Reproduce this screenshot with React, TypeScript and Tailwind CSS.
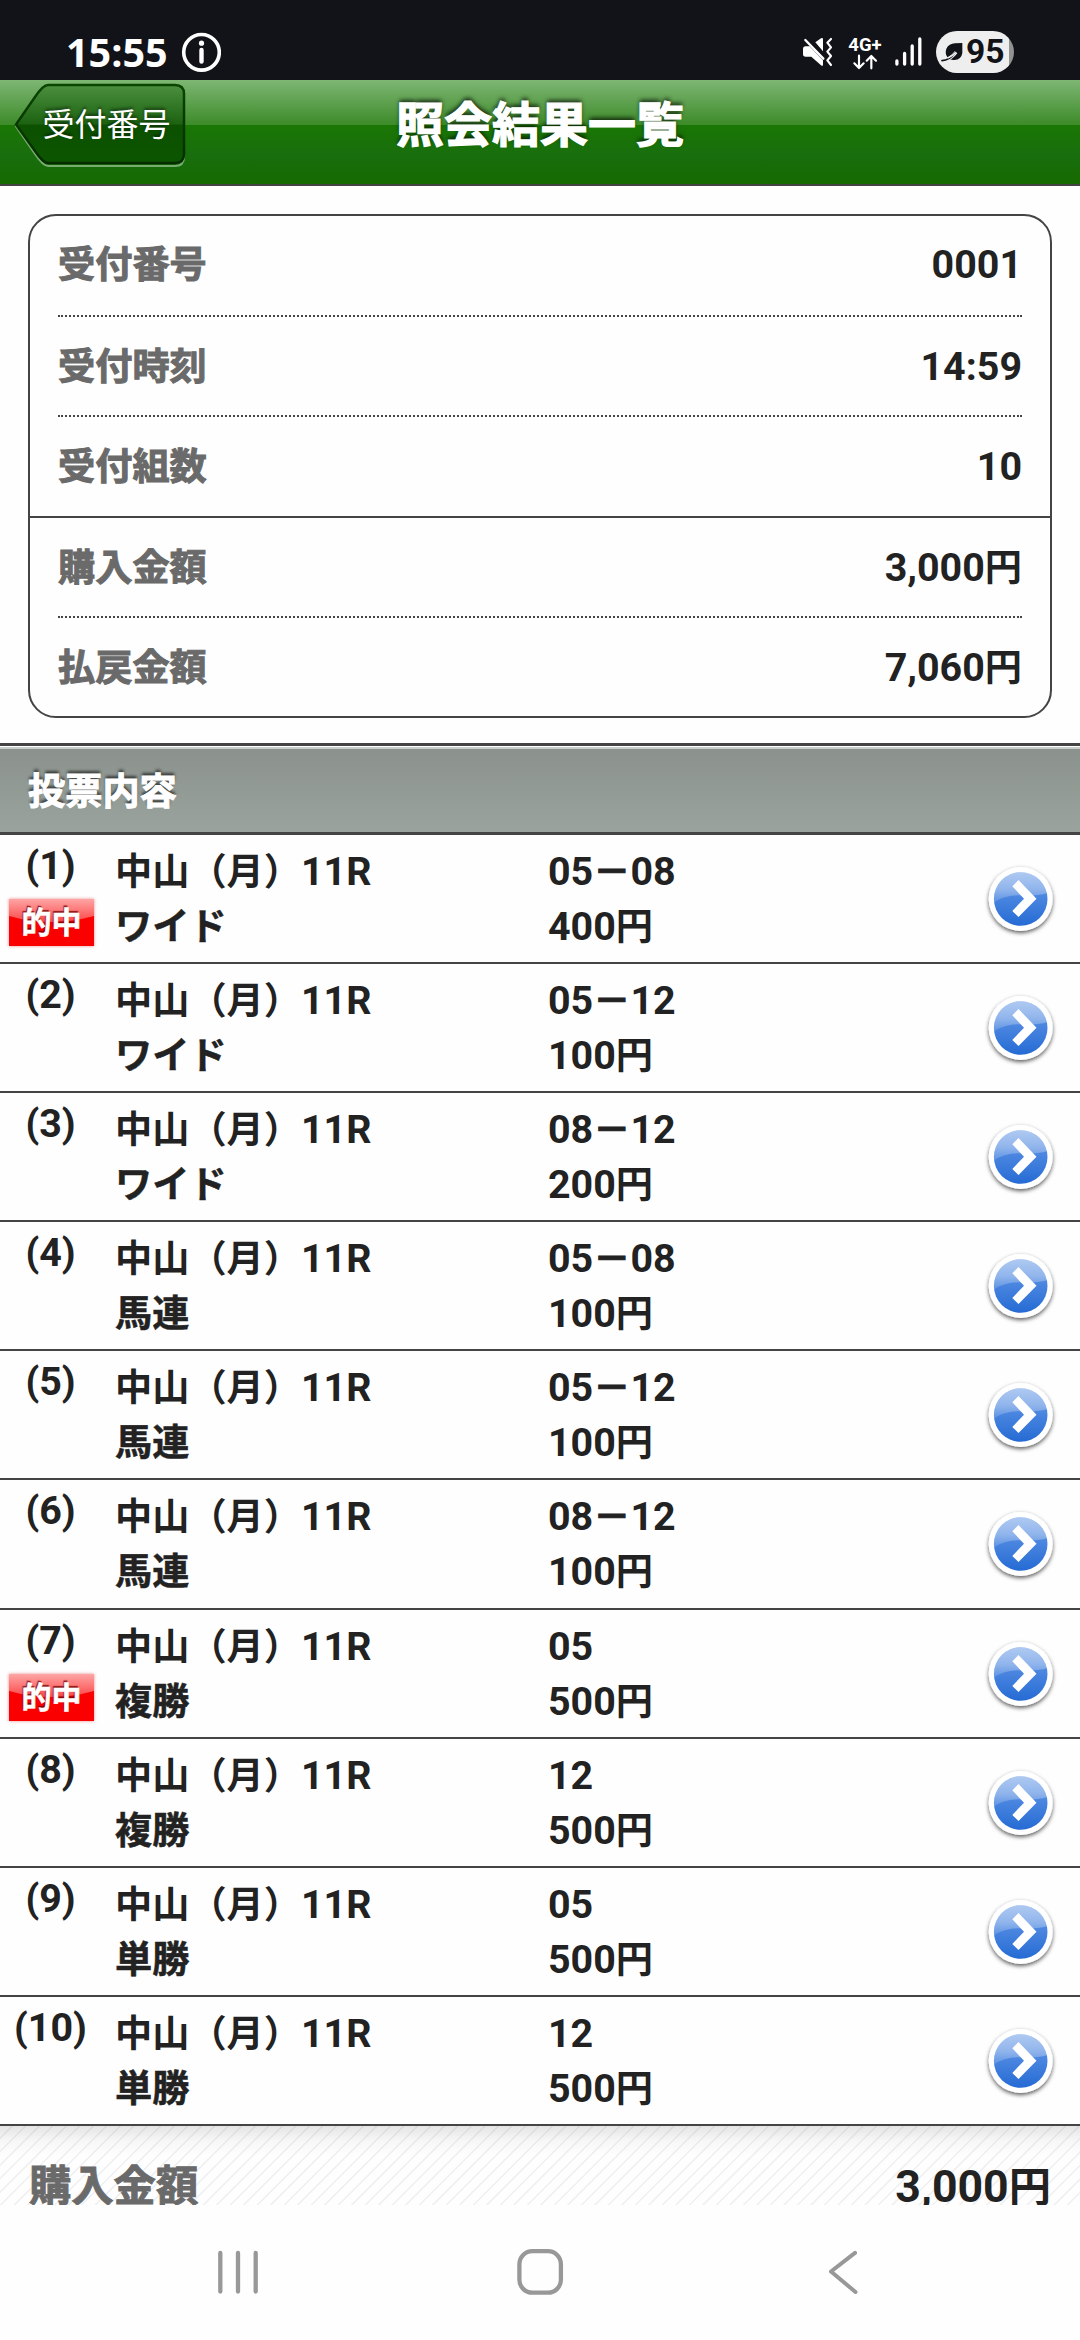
// App.tsx

import type { ReactNode } from "react";

type Bet = {
  no: number;
  type: string;
  pick: string[];
  amount: string;
  hit?: boolean;
};

const bets: Bet[] = [
  { no: 1, type: "ワイド", pick: ["05", "08"], amount: "400", hit: true },
  { no: 2, type: "ワイド", pick: ["05", "12"], amount: "100" },
  { no: 3, type: "ワイド", pick: ["08", "12"], amount: "200" },
  { no: 4, type: "馬連", pick: ["05", "08"], amount: "100" },
  { no: 5, type: "馬連", pick: ["05", "12"], amount: "100" },
  { no: 6, type: "馬連", pick: ["08", "12"], amount: "100" },
  { no: 7, type: "複勝", pick: ["05"], amount: "500", hit: true },
  { no: 8, type: "複勝", pick: ["12"], amount: "500" },
  { no: 9, type: "単勝", pick: ["05"], amount: "500" },
  { no: 10, type: "単勝", pick: ["12"], amount: "500" },
];

// Japanese glyphs are set a little smaller than the latin digits
function Jp({ children, className = "" }: { children: ReactNode; className?: string }) {
  return <span className={`text-[37.2px] leading-none ${className}`}>{children}</span>;
}

function StatusBar() {
  return (
    <div className="flex h-20 shrink-0 items-start justify-between bg-[#121318] text-white">
      <div className="flex pl-[66px]">
        <span className="mt-[25px] h-[55px] w-[99px] whitespace-nowrap font-['Open_Sans'] text-[39.5px] font-bold leading-[55px]">
          15:55
        </span>
        <svg className="mt-8 ml-4" width="40" height="40" viewBox="0 0 40 40" fill="none">
          <circle cx="20.5" cy="20.3" r="17.8" stroke="white" strokeWidth="3.6" />
          <circle cx="20.5" cy="11.2" r="2.6" fill="white" />
          <path d="M20.5 18v11.6" stroke="white" strokeWidth="4.4" strokeLinecap="round" />
        </svg>
      </div>

      <div className="flex pr-[66px]">
        {/* Mute / vibrate */}
        <svg className="mt-9" width="32" height="32" viewBox="0 0 96 96" fill="white">
          <path d="M3 39q0-8 8-8h12L63 73v13q-1 6-6 2L28 62H11q-8 0-8-8z" />
          <path d="M40 19L57 7q6-3 6 3v36z" />
          <path d="M10 12l54 56" stroke="white" strokeWidth="7" strokeLinecap="round" />
          <path d="M87 9L76 20l11 14-11 13 11 13-11 13 11 14" fill="none" stroke="white" strokeWidth="6.5" strokeLinecap="round" strokeLinejoin="round" />
        </svg>

        <div className="ml-[13px] flex w-[36px] flex-col items-center">
          <span className="mt-[34px] h-[19px] text-[18.5px] font-bold leading-[22px]">4G+</span>
          <svg className="mt-px" width="26" height="16" viewBox="0 0 78 48" fill="none" stroke="white" strokeWidth="6.5" strokeLinecap="round" strokeLinejoin="round">
            <path d="M21 5v36M7 28l14 14 14-14M58 43V7M44 20L58 6l14 14" />
          </svg>
        </div>

        <svg className="ml-[12px] mt-[37px]" width="27" height="29" viewBox="0 0 27 29" stroke="white" strokeWidth="3.3" strokeLinecap="round">
          <path d="M1.9 24v3M9.6 16.4V27M17.2 9v18M24.8 2v25" />
        </svg>

        <div className="mt-[31px] ml-[14px] flex h-[42px] w-[78px] items-center overflow-hidden rounded-full bg-[linear-gradient(to_right,#eeeeee_73px,#929292_73px)] text-[#121318]">
          <svg className="ml-[5px] shrink-0" width="22" height="20" viewBox="0 0 66 60">
            <path d="M64 3v30q-3 20-24 21-12 1-18-5Q10 35 16 20 24 5 42 4z" fill="#121318" />
            <path d="M2 56q26-2 43-25" fill="none" stroke="#eeeeee" strokeWidth="10" />
            <path d="M3 56q22-1 39-23" fill="none" stroke="#121318" strokeWidth="5" strokeLinecap="round" />
            <path d="M20 48q14-4 25-17" fill="none" stroke="#eeeeee" strokeWidth="5" />
          </svg>
          <span className="ml-[3px] text-[33.6px] font-bold leading-[42px]">95</span>
        </div>
      </div>
    </div>
  );
}

function Header() {
  return (
    <header className="relative flex h-[106px] shrink-0 items-start justify-center border-b-2 border-[#444444] bg-[linear-gradient(to_bottom,#7eb674_0px,#3d8b29_45px,#1a7704_45px,#186e0d_75px,#156a00_104px)]">
      <button className="absolute top-[2px] left-[12px] h-[88px] w-[176px]">
        <svg className="absolute inset-0" width="176" height="88" viewBox="0 0 176 88">
          <defs>
            <linearGradient id="back" x1="0" y1="2" x2="0" y2="84" gradientUnits="userSpaceOnUse">
              <stop offset="0" stopColor="#4d9140" />
              <stop offset="0.49" stopColor="#1c6211" />
              <stop offset="0.5" stopColor="#0c5000" />
              <stop offset="1" stopColor="#0c5600" />
            </linearGradient>
            <linearGradient id="backEdge" x1="0" y1="0" x2="0" y2="84" gradientUnits="userSpaceOnUse">
              <stop offset="0" stopColor="#0a4600" />
              <stop offset="1" stopColor="#052c00" />
            </linearGradient>
          </defs>
          <path d="M4 43.500L23 15Q31 3 36 3H163Q172 3 172 12V74Q172 83 163 83H36Q31 83 23 71z" transform="translate(0 1)" fill="none" stroke="#79ac70" strokeWidth="2" />
          <path d="M4 42.500L23 15Q31 3 36 3H163Q172 3 172 12V72Q172 81 163 81H36Q31 81 23 69z" fill="url(#back)" stroke="url(#backEdge)" strokeWidth="2.500" />
        </svg>
        <span className="relative -mt-[3px] block pl-[13px] text-[32px] leading-[84px] whitespace-nowrap text-white [text-shadow:0_-2px_3px_rgba(0,0,0,0.5)]">
          受付番号
        </span>
      </button>
      <h1 className="text-[48px] font-bold leading-[92px] text-white [-webkit-text-stroke:1.2px_white] [text-shadow:0_-3px_4px_rgba(0,0,0,0.7)]">
        照会結果一覧
      </h1>
    </header>
  );
}

function SummaryRow({ label, value, className = "" }: { label: string; value: ReactNode; className?: string }) {
  return (
    <div className={`mx-7 flex justify-between leading-[97px] ${className}`}>
      <span>
        <Jp className="text-[#6a6a6a] [-webkit-text-stroke:1px_#6a6a6a]">{label}</Jp>
      </span>
      <span>{value}</span>
    </div>
  );
}

function HitBadge() {
  return (
    <span className="absolute top-[64px] left-[9px] flex h-[47px] w-[85px] items-center justify-center overflow-hidden bg-[#fb0000] shadow-[0_0_3px_rgba(220,60,60,0.6)]">
      <svg className="absolute inset-0" width="85" height="47" viewBox="0 0 85 47">
        <defs>
          <linearGradient id="gloss" x1="0" y1="0" x2="0" y2="1">
            <stop offset="0" stopColor="white" stopOpacity="0.65" />
            <stop offset="1" stopColor="white" stopOpacity="0.28" />
          </linearGradient>
        </defs>
        <path d="M0 0H85V17Q42 29 0 17z" fill="url(#gloss)" />
      </svg>
      <span className="relative text-[30px] font-bold leading-[47px] text-white [-webkit-text-stroke:0.6px_white] [text-shadow:-1px_-2px_1px_rgba(110,0,0,0.8)]">的中</span>
    </span>
  );
}

function ArrowButton() {
  return (
    <svg className="mt-[25px] ml-auto mr-[19px] shrink-0" width="80" height="80" viewBox="0 0 80 80">
      <defs>
        <linearGradient id="ball" x1="0" y1="0" x2="0" y2="1">
          <stop offset="0" stopColor="#689ae6" />
          <stop offset="0.5" stopColor="#4884df" />
          <stop offset="1" stopColor="#256bd4" />
        </linearGradient>
        <linearGradient id="shine" x1="0" y1="0" x2="0" y2="1">
          <stop offset="0" stopColor="white" stopOpacity="0.5" />
          <stop offset="0.6" stopColor="white" stopOpacity="0.35" />
          <stop offset="1" stopColor="white" stopOpacity="0.1" />
        </linearGradient>
        <clipPath id="ballClip">
          <circle cx="39.700" cy="39" r="26.800" />
        </clipPath>
        <filter id="drop" x="-20%" y="-20%" width="140%" height="140%">
          <feDropShadow dx="0" dy="2" stdDeviation="2.200" floodColor="#000" floodOpacity="0.65" />
        </filter>
      </defs>
      <circle cx="39.700" cy="39" r="32" fill="white" filter="url(#drop)" />
      <circle cx="39.700" cy="39" r="26.800" fill="url(#ball)" />
      <path d="M10 44Q24 34 42 35.500 58 36 70 32V8H10z" fill="url(#shine)" clipPath="url(#ballClip)" />
      <path d="M31.300 26.300l6.200-6.300L55.500 38.700 37.500 57l-6.200-6L43 38.700z" fill="white" />
    </svg>
  );
}

function BetRow({ bet }: { bet: Bet }) {
  return (
    <li className="relative flex h-[129.1px] border-b-2 border-[#444444] leading-[55px]">
      <span className="w-[101px] pt-[3px] text-center">({bet.no})</span>
      {bet.hit && <HitBadge />}
      <div className="w-[433px] pt-[9px] pl-[14px]">
        <p>
          <Jp>中山（月）</Jp>11R
        </p>
        <p>
          <Jp className="[-webkit-text-stroke:0.5px_#222222]">{bet.type}</Jp>
        </p>
      </div>
      <div className="pt-[9px] pl-[14px]">
        <p>
          {bet.pick[0]}
          {bet.pick[1] && (
            <>
              <Jp className="[-webkit-text-stroke:1px_#222222]">－</Jp>
              {bet.pick[1]}
            </>
          )}
        </p>
        <p>
          {bet.amount}
          <Jp>円</Jp>
        </p>
      </div>
      <ArrowButton />
    </li>
  );
}

function NavigationBar() {
  return (
    <nav className="flex h-[135px] shrink-0 items-start bg-[#fefefe] pt-[42px] pl-[214px]">
      <svg width="48" height="50" viewBox="0 0 48 50" stroke="#989898" strokeWidth="4.300" strokeLinecap="round">
        <path d="M6.300 6v38.500M24 6v38.500M41.700 6v38.500" />
      </svg>
      <svg className="ml-[253px]" width="50" height="50" viewBox="0 0 50 50" fill="none" stroke="#989898" strokeWidth="4.300">
        <rect x="4.400" y="4.200" width="41.500" height="41.500" rx="13" />
      </svg>
      <svg className="ml-[261px]" width="36" height="50" viewBox="0 0 36 50" fill="none" stroke="#989898" strokeWidth="4" strokeLinecap="round" strokeLinejoin="round">
        <path d="M29 5.800L5 24.500 29.500 45" />
      </svg>
    </nav>
  );
}

export default function App() {
  return (
    <div className="flex h-[2340px] w-[1080px] flex-col overflow-hidden bg-white font-[Roboto,'Noto_Sans_CJK_JP',sans-serif] text-[39.4px] text-[#222222]">
      <StatusBar />
      <Header />

      <main className="flex h-[2019px] flex-col overflow-hidden bg-[#fefefe] font-bold">
        {/* Receipt summary */}
        <section className="mx-7 mt-7 h-[504px] shrink-0 rounded-[28px] border-2 border-[#444444]">
          <SummaryRow label="受付番号" value="0001" className="h-[101px] border-b-2 border-dotted border-[#444444]" />
          <SummaryRow label="受付時刻" value="14:59" className="h-[100px] border-b-2 border-dotted border-[#444444] pt-px" />
          <SummaryRow label="受付組数" value="10" className="h-[99px] pt-px" />
          <hr className="border-t-2 border-[#444444]" />
          <SummaryRow label="購入金額" value={<>3,000<Jp>円</Jp></>} className="h-[100px] border-b-2 border-dotted border-[#444444] pt-px" />
          <SummaryRow label="払戻金額" value={<>7,060<Jp>円</Jp></>} className="h-[98px] pt-px" />
        </section>

        <h2 className="mt-[25px] h-[92px] shrink-0 border-y-[3px] border-[#444444] bg-[linear-gradient(to_bottom,#ffffff_1px,#c9d0cb_1px,#c9d0cb_3px,#8b928d_3px,#9aa39d_100%)] pt-[3px] pl-7 text-[37.2px] leading-[86px] text-white [-webkit-text-stroke:1px_white] [text-shadow:0_-3px_3px_rgba(0,0,0,0.6)]">
          投票内容
        </h2>

        <ul className="shrink-0">
          {bets.map((bet) => (
            <BetRow key={bet.no} bet={bet} />
          ))}
        </ul>

        {/* Total, continues below the fold */}
        <footer className="flex h-[120px] shrink-0 justify-between bg-[linear-gradient(to_bottom,rgba(0,0,0,0.1),rgba(0,0,0,0.03)_14px,transparent_30px),repeating-linear-gradient(135deg,#fefefe_0px,#fefefe_7.6px,#f0f0f0_8px,#f0f0f0_9.200px,#fefefe_9.550px)] px-[29px] pt-[2px] leading-[118px]">
          <span className="text-[42.3px] text-[#6a6a6a] [-webkit-text-stroke:1px_#6a6a6a]">購入金額</span>
          <span className="text-[44.6px]">
            3,000<span className="text-[42.3px] leading-none">円</span>
          </span>
        </footer>
      </main>

      <NavigationBar />
    </div>
  );
}
